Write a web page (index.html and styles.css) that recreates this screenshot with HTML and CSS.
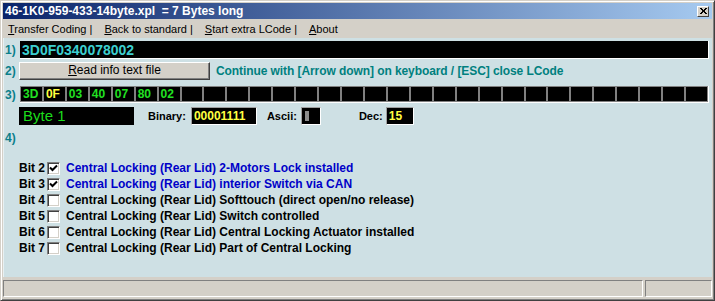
FILE: index.html
```html
<!DOCTYPE html>
<html>
<head>
<meta charset="utf-8">
<link rel="stylesheet" href="styles.css">
</head>
<body>
<div class="window">
  <div class="titlebar">
    <span class="title">46-1K0-959-433-14byte.xpl &nbsp;= 7 Bytes long</span>
    <span class="close"><svg width="9" height="8" viewBox="0 0 9 8"><path d="M1 1 L7 7 M2 1 L8 7 M7 1 L1 7 M8 1 L2 7" stroke="#000" stroke-width="1"/></svg></span>
  </div>
  <div class="menubar">
    <span class="mi"><u>T</u>ransfer Coding |</span>
    <span class="mi"><u>B</u>ack to standard |</span>
    <span class="mi"><u>S</u>tart extra LCode |</span>
    <span class="mi"><u>A</u>bout</span>
  </div>
  <div class="client">
    <div class="row r1">
      <span class="num">1)</span>
      <div class="codefield">3D0F0340078002</div>
    </div>
    <div class="row r2">
      <span class="num">2)</span>
      <div class="btn"><u>R</u>ead info text file</div>
      <span class="hint">Continue with [Arrow down] on keyboard / [ESC] close LCode</span>
    </div>
    <div class="row r3">
      <span class="num">3)</span>
      <div class="strip">
        <div class="cell">3D</div><div class="cell sel">0F</div><div class="cell">03</div><div class="cell">40</div><div class="cell">07</div><div class="cell">80</div><div class="cell">02</div>
        <div class="cell"></div><div class="cell"></div><div class="cell"></div><div class="cell"></div><div class="cell"></div><div class="cell"></div><div class="cell"></div><div class="cell"></div>
        <div class="cell"></div><div class="cell"></div><div class="cell"></div><div class="cell"></div><div class="cell"></div><div class="cell"></div><div class="cell"></div><div class="cell"></div>
        <div class="cell"></div><div class="cell"></div><div class="cell"></div><div class="cell"></div><div class="cell"></div><div class="cell"></div><div class="cell"></div>
      </div>
    </div>
    <div class="row r4">
      <span class="num"></span>
      <div class="bytefield">Byte 1</div>
      <span class="lbl lbl-bin">Binary:</span>
      <div class="box box-bin">00001111</div>
      <span class="lbl lbl-asc">Ascii:</span>
      <div class="box box-asc"><span class="bar"></span></div>
      <span class="lbl lbl-dec">Dec:</span>
      <div class="box box-dec">15</div>
    </div>
    <div class="row r5">
      <span class="num">4)</span>
    </div>
    <div class="bits">
      <div class="bit on"><span class="bn">Bit 2</span><span class="cb"><svg width="9" height="9" viewBox="0 0 9 9"><path d="M1 3.5 L3.5 6 L8 1.5" fill="none" stroke="#000" stroke-width="2"/></svg></span><span class="bt">Central Locking (Rear Lid) 2-Motors Lock installed</span></div>
      <div class="bit on"><span class="bn">Bit 3</span><span class="cb"><svg width="9" height="9" viewBox="0 0 9 9"><path d="M1 3.5 L3.5 6 L8 1.5" fill="none" stroke="#000" stroke-width="2"/></svg></span><span class="bt">Central Locking (Rear Lid) interior Switch via CAN</span></div>
      <div class="bit"><span class="bn">Bit 4</span><span class="cb"></span><span class="bt">Central Locking (Rear Lid) Softtouch (direct open/no release)</span></div>
      <div class="bit"><span class="bn">Bit 5</span><span class="cb"></span><span class="bt">Central Locking (Rear Lid) Switch controlled</span></div>
      <div class="bit"><span class="bn">Bit 6</span><span class="cb"></span><span class="bt">Central Locking (Rear Lid) Central Locking Actuator installed</span></div>
      <div class="bit"><span class="bn">Bit 7</span><span class="cb"></span><span class="bt">Central Locking (Rear Lid) Part of Central Locking</span></div>
    </div>
  </div>
  <div class="statusbar">
    <div class="panel p1"></div>
    <div class="panel p2"></div>
  </div>
</div>
</body>
</html>
```

FILE: styles.css
```css
* { box-sizing: border-box; }
html, body { margin: 0; padding: 0; }
body { width: 715px; height: 301px; overflow: hidden; background: #d4d0c8; font-family: "Liberation Sans", Arial, sans-serif; }

.window {
  width: 715px; height: 301px;
  background: #d4d0c8;
  border: 1px solid; border-color: #d4d0c8 #404040 #404040 #d4d0c8;
  box-shadow: inset 1px 1px #ffffff, inset -1px -1px #808080;
  padding: 2px;
  display: flex; flex-direction: column;
}

.titlebar {
  height: 16px; flex: none;
  background: linear-gradient(to right, #0a246a, #a6caf0);
  display: flex; align-items: center; justify-content: space-between;
  padding: 0 3px 0 2px;
}
.title { color: #fff; font-weight: bold; font-size: 12px; white-space: pre; }
.close {
  width: 12px; height: 11px; background: #d4d0c8;
  border: 1px solid; border-color: #fff #404040 #404040 #fff;
  display: flex; align-items: center; justify-content: center;
}
.close svg { display: block; }

.menubar {
  height: 19px; flex: none;
  display: flex; align-items: center;
  padding-left: 5px;
  font-size: 11px; color: #000;
}
.mi { margin-right: 12px; white-space: pre; }

.client {
  flex: 1;
  background: #cee0e4;
  padding: 3px 3px 0 0;
  display: flex; flex-direction: column;
  box-shadow: inset 1px 0 #e8f0f2;
}
.row { display: flex; align-items: center; }
.num { width: 16px; flex: none; padding-left: 2px; color: #0b7f8a; font-weight: bold; font-size: 12px; }

.r1 { height: 18px; }
.codefield {
  flex: 1; height: 18px; margin-left: 1px;
  background: #000; color: #3ccfd0;
  font-weight: bold; font-size: 14px; line-height: 18px;
  padding-left: 2px;
  border-right: 1px solid #fff; border-bottom: 1px solid #fff;
}

.r2 { height: 18px; margin-top: 3px; }
.btn {
  width: 191px; height: 18px;
  background: #d4d0c8;
  border: 1px solid; border-color: #fff #404040 #404040 #fff;
  box-shadow: inset -1px -1px #808080;
  font-size: 12px; text-align: center; line-height: 15px; color: #000;
}
.hint { margin-left: 6px; color: #00807f; font-weight: bold; font-size: 12px; letter-spacing: -0.08px; white-space: nowrap; }

.r3 { height: 17px; margin-top: 6px; }
.strip {
  flex: 1; height: 17px; margin-left: 1px;
  display: grid; grid-template-columns: repeat(30, 1fr); gap: 2px;
  background: #808080; padding: 1px;
  border-right: 1px solid #fff; border-bottom: 1px solid #fff;
}
.cell { background: #000; color: #22e022; font-weight: bold; font-size: 12px; line-height: 14px; padding-left: 2px; }
.cell.sel { color: #ffff40; }

.r4 { height: 18px; margin-top: 4px; }
.bytefield {
  width: 115px; height: 18px;
  background: #000; color: #1cdc1c;
  font-size: 15px; line-height: 18px; padding-left: 4px;
}
.lbl { font-weight: bold; font-size: 11px; color: #000; }
.lbl-bin { margin-left: 14px; }
.lbl-asc { margin-left: 10px; }
.lbl-dec { margin-left: 38px; }
.box {
  height: 18px; background: #000; color: #ffff40;
  font-weight: bold; font-size: 12px; line-height: 16px; padding-left: 2px;
  border: 1px solid; border-color: #a0a0a0 #fff #fff #a0a0a0;
}
.box-bin { width: 66px; margin-left: 5px; }
.box-asc { width: 20px; margin-left: 4px; padding: 3px 0 0 3px; }
.bar { display: block; width: 4px; height: 10px; background: #8c8c8c; }
.box-dec { width: 28px; margin-left: 3px; }

.r5 { height: 13px; margin-top: 6px; }

.bits { margin-top: 16px; padding-left: 16px; display: flex; flex-direction: column; }
.bit { height: 16px; display: flex; align-items: center; font-weight: bold; font-size: 12px; color: #000; }
.bit.on .bt { color: #0000c8; }
.bn { width: 28px; }
.cb {
  width: 13px; height: 13px; background: #fff;
  border: 1px solid; border-color: #808080 #fff #fff #808080;
  box-shadow: inset 1px 1px #404040, inset -1px -1px #d4d0c8;
  display: flex; align-items: center; justify-content: center;
}
.cb svg { display: block; }
.bt { margin-left: 6px; white-space: nowrap; }

.statusbar { height: 21px; flex: none; padding-top: 3px; display: flex; gap: 2px; }
.panel { height: 17px; border: 1px solid; border-color: #808080 #fff #fff #808080; }
.p1 { width: 640px; }
.p2 { flex: 1; }
```
